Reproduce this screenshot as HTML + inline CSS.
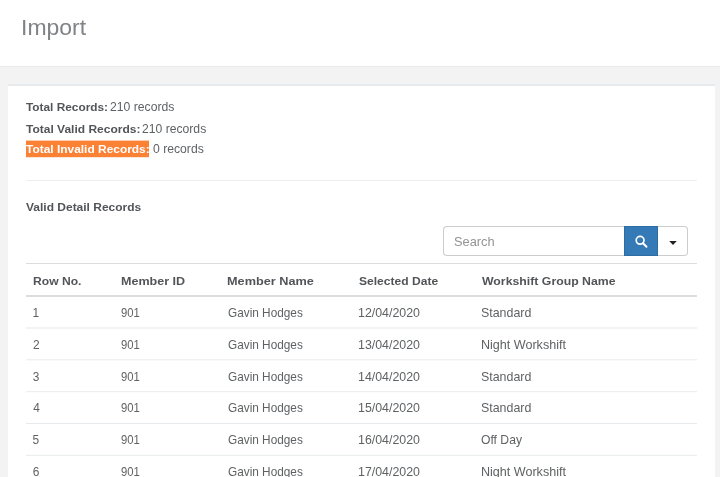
<!DOCTYPE html>
<html><head><meta charset="utf-8"><title>Import</title>
<style>
*{box-sizing:border-box;margin:0;padding:0}
html,body{width:720px;height:477px;overflow:hidden}
body{background:#f3f3f4;font-family:"Liberation Sans","DejaVu Sans",sans-serif;position:relative}
.head{position:absolute;left:0;top:0;width:720px;height:67px;background:#fff;border-bottom:1px solid #e7eaec}
.panel{position:absolute;left:8px;top:84px;width:707px;height:400px;background:#fff;border-top:2px solid #e7eaec}
.t{position:absolute;white-space:nowrap;line-height:1;transform-origin:0 0}
.tx{position:absolute;left:0;top:0;width:720px;height:477px;will-change:transform}
.hlbox{position:absolute;left:26px;top:141px;width:123.4px;height:16px;background:#fb8135;box-shadow:0 -1px 0 rgba(251,129,53,.4),0 1px 0 rgba(251,129,53,.2)}
.ln{position:absolute;left:26px;width:671px;height:1px;background:#e7eaec}
.inp{position:absolute;left:443px;top:226px;width:182px;height:30px;border:1px solid #ccc;border-right:0;border-radius:4px 0 0 4px;background:#fff}
.btn{position:absolute;left:624px;top:226px;width:34px;height:30px;background:#337ab7;border:1px solid #2e6da4}
.dd{position:absolute;left:658px;top:226px;width:30px;height:30px;border:1px solid #ccc;border-left:0;border-radius:0 4px 4px 0;background:#fff}
.dd i{position:absolute;left:11.3px;top:15px;border:3.7px solid transparent;border-top:3.7px solid #222;border-bottom:0}
</style></head><body>
<div class="head"></div>
<div class="panel"></div>
<div class="hlbox"></div>
<div class="ln" style="top:180px;background:#eeeeee"></div>
<div class="ln" style="top:263px;background:#dddddd"></div>
<div class="ln" style="top:295px;height:2px;background:#dddddd"></div>
<div class="ln" style="top:327px;opacity:0.55"></div>
<div class="ln" style="top:328px;opacity:0.55"></div>
<div class="ln" style="top:359px;opacity:0.70"></div>
<div class="ln" style="top:360px;opacity:0.30"></div>
<div class="ln" style="top:391px;opacity:0.80"></div>
<div class="ln" style="top:392px;opacity:0.20"></div>
<div class="ln" style="top:423px;opacity:1.00"></div>
<div class="ln" style="top:454px;opacity:0.20"></div>
<div class="ln" style="top:455px;opacity:0.80"></div>
<div class="inp"></div><div class="btn"><svg width="32" height="28" viewBox="0 0 32 28"><circle cx="15.1" cy="13.3" r="3.9" fill="none" stroke="#fff" stroke-width="1.7"/><path d="M18 16.2l3.5 3.6" stroke="#fff" stroke-width="2" stroke-linecap="round"/></svg></div><div class="dd"><svg width="29" height="28" viewBox="0 0 29 28"><path d="M11.2 14.1h7.6l-3.8 3.9z" fill="#222"/></svg></div>
<div class="tx">
<div class="t" id="t0" style="left:21.30px;top:17.00px;font-size:22.60px;font-weight:400;color:#808385;letter-spacing:0.000px;transform:scaleX(1.0164)">Import</div>
<div class="t" id="t1" style="left:26.00px;top:101.01px;font-size:11.60px;font-weight:700;color:#525558;letter-spacing:0.000px;transform:scaleX(1.0215)">Total Records:</div>
<div class="t" id="t2" style="left:110.25px;top:102.00px;font-size:11.90px;font-weight:400;color:#5f6264;letter-spacing:0.000px;transform:scaleX(1.0261)">210 records</div>
<div class="t" id="t3" style="left:26.00px;top:123.01px;font-size:11.60px;font-weight:700;color:#525558;letter-spacing:0.000px;transform:scaleX(1.0347)">Total Valid Records:</div>
<div class="t" id="t4" style="left:142.20px;top:124.00px;font-size:11.90px;font-weight:400;color:#5f6264;letter-spacing:0.000px;transform:scaleX(1.0226)">210 records</div>
<div class="t" id="t5" style="left:26.00px;top:143.01px;font-size:11.60px;font-weight:700;color:#ffffff;letter-spacing:0.000px;transform:scaleX(1.0288)">Total Invalid Records:</div>
<div class="t" id="t6" style="left:152.79px;top:144.00px;font-size:11.90px;font-weight:400;color:#5f6264;letter-spacing:0.000px;transform:scaleX(1.0244)">0 records</div>
<div class="t" id="t7" style="left:26.10px;top:201.01px;font-size:11.60px;font-weight:700;color:#525558;letter-spacing:0.000px;transform:scaleX(1.0337)">Valid Detail Records</div>
<div class="t" id="t8" style="left:454.36px;top:235.00px;font-size:13.20px;font-weight:400;color:#939393;letter-spacing:0.000px;transform:scaleX(0.9731)">Search</div>
<div class="t" id="t9" style="left:32.66px;top:275.01px;font-size:11.60px;font-weight:700;color:#525558;letter-spacing:0.000px;transform:scaleX(1.0442)">Row No.</div>
<div class="t" id="t10" style="left:121.37px;top:275.01px;font-size:11.60px;font-weight:700;color:#525558;letter-spacing:0.000px;transform:scaleX(1.0820)">Member ID</div>
<div class="t" id="t11" style="left:227.28px;top:275.01px;font-size:11.60px;font-weight:700;color:#525558;letter-spacing:0.000px;transform:scaleX(1.0953)">Member Name</div>
<div class="t" id="t12" style="left:358.70px;top:275.01px;font-size:11.60px;font-weight:700;color:#525558;letter-spacing:0.000px;transform:scaleX(1.0407)">Selected Date</div>
<div class="t" id="t13" style="left:481.80px;top:275.01px;font-size:11.60px;font-weight:700;color:#525558;letter-spacing:0.000px;transform:scaleX(1.0594)">Workshift Group Name</div>
<div class="t" id="t14" style="left:32.52px;top:308.00px;font-size:11.90px;font-weight:400;color:#5f6264;letter-spacing:0.000px;transform:scaleX(1.0000)">1</div>
<div class="t" id="t15" style="left:121.42px;top:308.00px;font-size:11.90px;font-weight:400;color:#5f6264;letter-spacing:0.000px;transform:scaleX(0.9449)">901</div>
<div class="t" id="t16" style="left:227.66px;top:308.00px;font-size:11.90px;font-weight:400;color:#5f6264;letter-spacing:0.000px;transform:scaleX(0.9925)">Gavin Hodges</div>
<div class="t" id="t17" style="left:358.09px;top:308.00px;font-size:11.90px;font-weight:400;color:#5f6264;letter-spacing:0.000px;transform:scaleX(1.0400)">12/04/2020</div>
<div class="t" id="t18" style="left:481.36px;top:308.00px;font-size:11.90px;font-weight:400;color:#5f6264;letter-spacing:0.000px;transform:scaleX(1.0425)">Standard</div>
<div class="t" id="t19" style="left:32.93px;top:340.00px;font-size:11.90px;font-weight:400;color:#5f6264;letter-spacing:0.000px;transform:scaleX(1.0000)">2</div>
<div class="t" id="t20" style="left:121.42px;top:340.00px;font-size:11.90px;font-weight:400;color:#5f6264;letter-spacing:0.000px;transform:scaleX(0.9449)">901</div>
<div class="t" id="t21" style="left:227.66px;top:340.00px;font-size:11.90px;font-weight:400;color:#5f6264;letter-spacing:0.000px;transform:scaleX(0.9925)">Gavin Hodges</div>
<div class="t" id="t22" style="left:358.09px;top:340.00px;font-size:11.90px;font-weight:400;color:#5f6264;letter-spacing:0.000px;transform:scaleX(1.0400)">13/04/2020</div>
<div class="t" id="t23" style="left:480.85px;top:340.00px;font-size:11.90px;font-weight:400;color:#5f6264;letter-spacing:0.000px;transform:scaleX(1.0564)">Night Workshift</div>
<div class="t" id="t24" style="left:32.81px;top:372.00px;font-size:11.90px;font-weight:400;color:#5f6264;letter-spacing:0.000px;transform:scaleX(1.0000)">3</div>
<div class="t" id="t25" style="left:121.42px;top:372.00px;font-size:11.90px;font-weight:400;color:#5f6264;letter-spacing:0.000px;transform:scaleX(0.9449)">901</div>
<div class="t" id="t26" style="left:227.66px;top:372.00px;font-size:11.90px;font-weight:400;color:#5f6264;letter-spacing:0.000px;transform:scaleX(0.9925)">Gavin Hodges</div>
<div class="t" id="t27" style="left:358.09px;top:372.00px;font-size:11.90px;font-weight:400;color:#5f6264;letter-spacing:0.000px;transform:scaleX(1.0400)">14/04/2020</div>
<div class="t" id="t28" style="left:481.36px;top:372.00px;font-size:11.90px;font-weight:400;color:#5f6264;letter-spacing:0.000px;transform:scaleX(1.0425)">Standard</div>
<div class="t" id="t29" style="left:33.24px;top:403.00px;font-size:11.90px;font-weight:400;color:#5f6264;letter-spacing:0.000px;transform:scaleX(1.0000)">4</div>
<div class="t" id="t30" style="left:121.42px;top:403.00px;font-size:11.90px;font-weight:400;color:#5f6264;letter-spacing:0.000px;transform:scaleX(0.9449)">901</div>
<div class="t" id="t31" style="left:227.66px;top:403.00px;font-size:11.90px;font-weight:400;color:#5f6264;letter-spacing:0.000px;transform:scaleX(0.9925)">Gavin Hodges</div>
<div class="t" id="t32" style="left:358.09px;top:403.00px;font-size:11.90px;font-weight:400;color:#5f6264;letter-spacing:0.000px;transform:scaleX(1.0400)">15/04/2020</div>
<div class="t" id="t33" style="left:481.36px;top:403.00px;font-size:11.90px;font-weight:400;color:#5f6264;letter-spacing:0.000px;transform:scaleX(1.0425)">Standard</div>
<div class="t" id="t34" style="left:32.62px;top:435.00px;font-size:11.90px;font-weight:400;color:#5f6264;letter-spacing:0.000px;transform:scaleX(1.0000)">5</div>
<div class="t" id="t35" style="left:121.42px;top:435.00px;font-size:11.90px;font-weight:400;color:#5f6264;letter-spacing:0.000px;transform:scaleX(0.9449)">901</div>
<div class="t" id="t36" style="left:227.66px;top:435.00px;font-size:11.90px;font-weight:400;color:#5f6264;letter-spacing:0.000px;transform:scaleX(0.9925)">Gavin Hodges</div>
<div class="t" id="t37" style="left:358.09px;top:435.00px;font-size:11.90px;font-weight:400;color:#5f6264;letter-spacing:0.000px;transform:scaleX(1.0400)">16/04/2020</div>
<div class="t" id="t38" style="left:481.35px;top:435.00px;font-size:11.90px;font-weight:400;color:#5f6264;letter-spacing:0.000px;transform:scaleX(1.0222)">Off Day</div>
<div class="t" id="t39" style="left:32.76px;top:467.00px;font-size:11.90px;font-weight:400;color:#5f6264;letter-spacing:0.000px;transform:scaleX(1.0000)">6</div>
<div class="t" id="t40" style="left:121.42px;top:467.00px;font-size:11.90px;font-weight:400;color:#5f6264;letter-spacing:0.000px;transform:scaleX(0.9449)">901</div>
<div class="t" id="t41" style="left:227.66px;top:467.00px;font-size:11.90px;font-weight:400;color:#5f6264;letter-spacing:0.000px;transform:scaleX(0.9925)">Gavin Hodges</div>
<div class="t" id="t42" style="left:358.09px;top:467.00px;font-size:11.90px;font-weight:400;color:#5f6264;letter-spacing:0.000px;transform:scaleX(1.0400)">17/04/2020</div>
<div class="t" id="t43" style="left:480.85px;top:467.00px;font-size:11.90px;font-weight:400;color:#5f6264;letter-spacing:0.000px;transform:scaleX(1.0564)">Night Workshift</div>
</div>
</body></html>
